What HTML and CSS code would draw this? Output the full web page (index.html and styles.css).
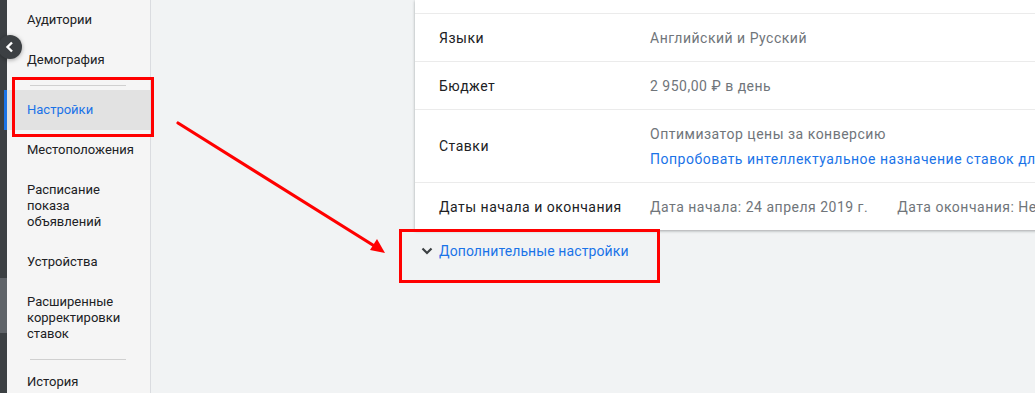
FILE: index.html
```html
<!DOCTYPE html>
<html lang="ru">
<head>
    <meta charset="UTF-8">
    <title>Настройки кампании</title>
    <link rel="stylesheet" href="styles.css">
</head>
<body>

    <!-- Left rail -->
    <div class="rail">
        <div class="rail-thumb"></div>
    </div>

    <!-- Collapse button -->
    <button class="collapse-btn">
        <svg width="12" height="12" viewBox="0 0 12 12"><path d="M8 1.5 L3.5 6 L8 10.5" fill="none" stroke="#fff" stroke-width="2.4"/></svg>
    </button>

    <!-- Sidebar menu -->
    <nav class="sidebar">
        <div class="nav-item">Аудитории</div>
        <div class="nav-item">Демография</div>
        <div class="nav-sep"></div>
        <div class="nav-item active">Настройки</div>
        <div class="nav-item">Местоположения</div>
        <div class="nav-item">Расписание<br>показа<br>объявлений</div>
        <div class="nav-item">Устройства</div>
        <div class="nav-item">Расширенные<br>корректировки<br>ставок</div>
        <div class="nav-sep"></div>
        <div class="nav-item last">История<br>изменений</div>
    </nav>

    <!-- Main content -->
    <main class="main">
        <div class="card">
            <div class="row row-cut"></div>
            <div class="row">
                <div class="label">Языки</div>
                <div class="value">Английский и Русский</div>
            </div>
            <div class="row">
                <div class="label">Бюджет</div>
                <div class="value">2 950,00 ₽ в день</div>
            </div>
            <div class="row row-tall">
                <div class="label">Ставки</div>
                <div class="value-stack">
                    <div class="value">Оптимизатор цены за конверсию</div>
                    <div class="value link">Попробовать интеллектуальное назначение ставок для этой кампании</div>
                </div>
            </div>
            <div class="row">
                <div class="label">Даты начала и окончания</div>
                <div class="value date-start">Дата начала: 24 апреля 2019 г.</div>
                <div class="value">Дата окончания: Не задана</div>
            </div>
        </div>

        <div class="more">
            <svg width="12" height="8" viewBox="0 0 12 8"><path d="M1.5 1.5 L6 6 L10.5 1.5" fill="none" stroke="#3c4043" stroke-width="2.2"/></svg>
            <span>Дополнительные настройки</span>
        </div>
    </main>

    <!-- Annotations -->
    <div class="mark mark-nav"></div>
    <div class="mark mark-more"></div>
    <svg class="arrow" width="1035" height="393" viewBox="0 0 1035 393">
        <line x1="178" y1="123" x2="376" y2="247" stroke="#f00" stroke-width="3.2" stroke-linecap="round"/>
        <polygon points="385,253 370,250 377,239" fill="#f00"/>
    </svg>

</body>
</html>
```

FILE: styles.css
```css
/* General Page Style */
body {
    margin: 0;
    height: 393px;
    overflow: hidden;
    display: flex;
    font-family: Roboto, "Noto Sans", Arial, sans-serif;
    background-color: #f1f3f4;
    color: #202124;
}

/* Dark rail on the left */
.rail {
    width: 7px;
    flex-shrink: 0;
    background-color: #3c4043;
    padding-top: 278px;
}

.rail-thumb {
    height: 55px;
    background-color: #5f6368;
}

.collapse-btn {
    position: absolute;
    left: -2px;
    top: 35px;
    width: 24px;
    height: 24px;
    border: none;
    border-radius: 50%;
    background-color: #3c4043;
    box-shadow: 0 1px 4px rgba(0, 0, 0, 0.35);
    display: flex;
    align-items: center;
    justify-content: center;
    padding: 0;
}

/* Sidebar */
.sidebar {
    width: 143px;
    flex-shrink: 0;
    background-color: #f5f5f5;
    border-right: 1px solid #dadce0;
    font-size: 13px;
    line-height: 16px;
}

.nav-item {
    padding: 12px 10px 12px 20px;
    color: #202124;
}

.nav-item.active {
    background-color: #e2e2e2;
    color: #1a73e8;
    box-shadow: inset 3px 0 0 #1a73e8;
    margin-left: -3px;
    padding-left: 23px;
}

.nav-item.last {
    padding-top: 10px;
}

.nav-sep {
    height: 10px;
    display: flex;
    align-items: center;
    padding: 0 24px 0 23px;
}

.nav-sep::after {
    content: "";
    flex: 1;
    height: 1px;
    background-color: #d0d0d0;
}

/* Main area */
.main {
    flex: 1;
    min-width: 0;
    padding-left: 264px;
}

.card {
    width: 760px;
    background-color: #fff;
    box-shadow: 0 1px 3px rgba(60, 64, 67, 0.3), 0 1px 2px rgba(60, 64, 67, 0.15);
    font-size: 14px;
    letter-spacing: 0.5px;
}

.row {
    display: flex;
    align-items: center;
    height: 47px;
    padding-left: 24px;
    border-top: 1px solid #ebebeb;
}

.row-cut {
    height: 13px;
    border-top: none;
}

.row-tall {
    height: 72px;
}

.label {
    width: 211px;
    flex-shrink: 0;
}

.value {
    color: #70757a;
    white-space: nowrap;
}

.value-stack {
    display: flex;
    flex-direction: column;
    gap: 9px;
}

.link {
    color: #1a73e8;
}

.date-start {
    margin-right: 29px;
}

/* Extra settings toggle */
.more {
    display: flex;
    align-items: center;
    gap: 6px;
    margin-top: 13px;
    padding-left: 6px;
    font-size: 14px;
    line-height: 16px;
    letter-spacing: 0.1px;
    color: #1a73e8;
}

/* Red annotations */
.mark {
    position: absolute;
    border: 3px solid #f00;
    box-sizing: border-box;
}

.mark-nav {
    left: 12px;
    top: 77px;
    width: 142px;
    height: 60px;
}

.mark-more {
    left: 399px;
    top: 229px;
    width: 261px;
    height: 54px;
}

.arrow {
    position: absolute;
    left: 0;
    top: 0;
    pointer-events: none;
}
```
